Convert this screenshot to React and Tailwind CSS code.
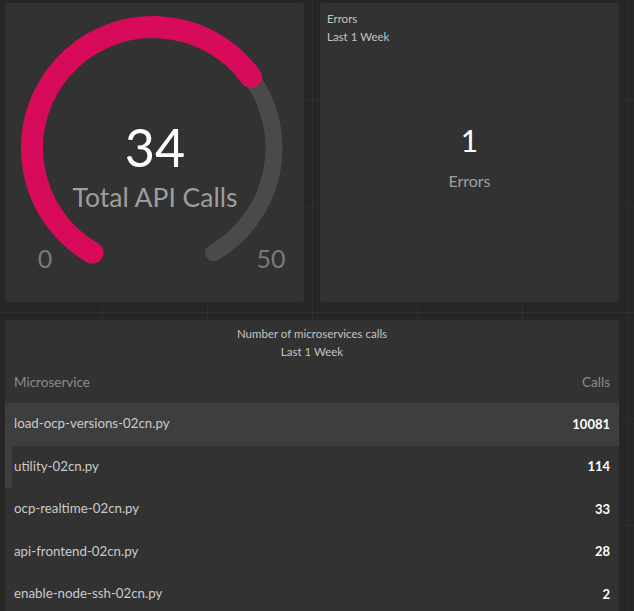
import React from 'react';

const rows = [
  { name: 'load-ocp-versions-02cn.py', calls: 10081, hover: true },
  { name: 'utility-02cn.py', calls: 114, edge: true },
  { name: 'ocp-realtime-02cn.py', calls: 33 },
  { name: 'api-frontend-02cn.py', calls: 28 },
  { name: 'enable-node-ssh-02cn.py', calls: 2 },
];

// gauge geometry (panel coords)
const cx = 148;
const cy = 145;
const r = 121;
const pt = (deg) => {
  const a = (deg * Math.PI) / 180;
  return [cx + r * Math.sin(a), cy - r * Math.cos(a)];
};
const arc = (from, to) => {
  const [x1, y1] = pt(from);
  const [x2, y2] = pt(to);
  const large = to - from > 180 ? 1 : 0;
  return `M ${x1} ${y1} A ${r} ${r} 0 ${large} 1 ${x2} ${y2}`;
};

const Gauge = ({ value, min, max, label }) => {
  const end = -150 + ((value - min) / (max - min)) * 300;
  return (
    <svg width="299" height="299" viewBox="0 0 299 299">
      <path d={arc(-150, 150)} fill="none" stroke="#4a4a4a" strokeWidth="17" strokeLinecap="round" />
      <path d={arc(-150, end)} fill="none" stroke="#d80b5b" strokeWidth="22" strokeLinecap="round" />
      <text x="150" y="164" textAnchor="middle" fill="#ffffff" fontSize="52" fontFamily="Lato, sans-serif">
        {value}
      </text>
      <text x="150" y="204" textAnchor="middle" fill="#9e9e9e" fontSize="26.5" fontFamily="Lato, sans-serif">
        {label}
      </text>
      <text x="40" y="265" textAnchor="middle" fill="#7a7a7a" fontSize="25" fontFamily="Lato, sans-serif">
        {min}
      </text>
      <text x="266" y="265" textAnchor="middle" fill="#7a7a7a" fontSize="25" fontFamily="Lato, sans-serif">
        {max}
      </text>
    </svg>
  );
};

export default function App() {
  return (
    <div
      className="h-[611px] w-[634px] overflow-hidden bg-[#262626] bg-[linear-gradient(90deg,#2f2f2f_1px,transparent_1px),linear-gradient(180deg,#2f2f2f_1px,transparent_1px)] bg-[length:105px_106.5px] bg-[position:102px_99px] pl-[5px] pt-[3px] font-['Lato',sans-serif]"
    >
      <div className="w-[614px]">
        <div className="grid grid-cols-2 gap-x-4">
          <div className="h-[299px] overflow-hidden rounded-[3px] bg-[#323232]">
            <Gauge value={34} min={0} max={50} label="Total API Calls" />
          </div>

          <div className="flex h-[299px] flex-col rounded-[3px] bg-[#323232] px-[7px] pt-[7px]">
            <div className="text-[11.5px] leading-[18px] text-[#c4c4c4]">
              <div>Errors</div>
              <div>Last 1 Week</div>
            </div>
            <div className="flex flex-1 flex-col items-center pt-[74px]">
              <div className="text-[30px] leading-[40px] text-white">1</div>
              <div className="mt-[9px] text-base text-[#a0a0a0]">Errors</div>
            </div>
          </div>
        </div>

        <div className="mt-[18px] rounded-[3px] bg-[#323232] pt-[5px]">
          <div className="text-center text-[11.5px] leading-[18px] text-[#c4c4c4]">
            <div>Number of microservices calls</div>
            <div>Last 1 Week</div>
          </div>
          <div className="flex h-[42px] items-center justify-between px-[9px] text-[13.5px] text-[#8c8c8c]">
            <span>Microservice</span>
            <span>Calls</span>
          </div>
          {rows.map((row) => (
            <div
              key={row.name}
              className={`relative flex h-[42.5px] items-center justify-between px-[9px] text-[13.3px] ${
                row.hover ? 'bg-[#3e3e3e]' : ''
              }`}
            >
              {row.edge && <div className="absolute left-0 top-0 h-full w-[7px] bg-[#3e3e3e]" />}
              <span className="text-[#cbcbcb]">{row.name}</span>
              <span className="text-[13px] font-bold text-white">{row.calls}</span>
            </div>
          ))}
        </div>
      </div>
    </div>
  );
}
